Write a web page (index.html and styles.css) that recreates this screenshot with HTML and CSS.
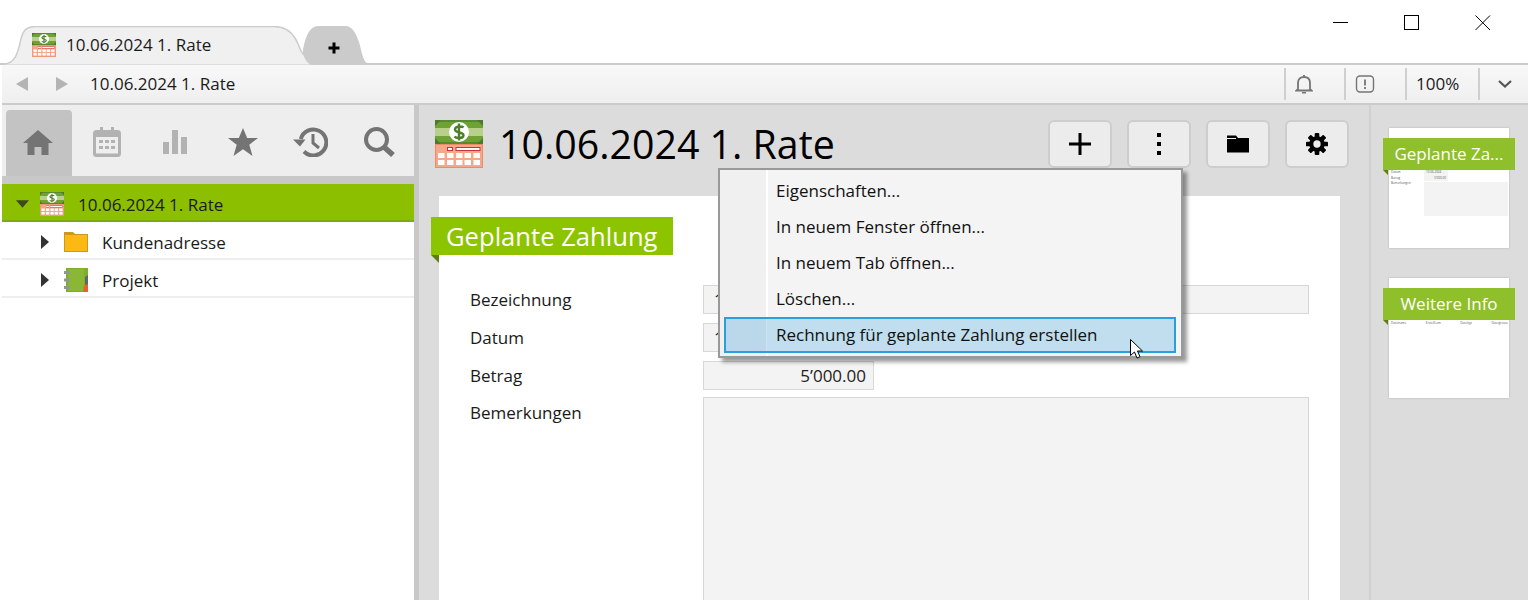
FILE: index.html
```html
<!DOCTYPE html>
<html lang="de">
<head>
<meta charset="utf-8">
<title>10.06.2024 1. Rate</title>
<link rel="stylesheet" href="styles.css">
</head>
<body>
<svg class="defs" width="0" height="0" aria-hidden="true">
  <symbol id="pay" viewBox="0 0 48 48">
    <rect width="48" height="24" fill="#568a30"/>
    <rect y="2" width="48" height="20" fill="#70a135"/>
    <rect x="0" y="8" width="48" height="8" fill="#b9d08c"/>
    <path d="M0 0h6L0 6zM48 0h-6l6 6zM0 24h6l-6-6zM48 24h-6l6-6z" fill="#4b7a2a"/>
    <circle cx="24" cy="12" r="10" fill="#fff"/>
    <path d="M28.5 7.5c-1-1.2-7.500-2-8.500 1.500-1 4.500 9 2.500 8.500 6.500-.5 3.500-7.500 3-9 1M24 3.500v17" fill="none" stroke="#4d7f2a" stroke-width="2.400"/>
    <rect y="24" width="48" height="24" fill="#ee8a66"/>
    <rect x="1" y="25" width="46" height="22" fill="#f5a78a"/>
    <rect x="12.500" y="27.500" width="5" height="3" fill="#fff" stroke="#c8343c" stroke-width="1"/>
    <rect x="21" y="27.500" width="24" height="3" fill="#fff" stroke="#c8343c" stroke-width="1"/>
    <path d="M3 33h6.500v5H3zM12 33h6.500v5H12zM21 33h6.500v5H21zM29.500 33h6.500v5h-6.500zM38.500 33h6.500v5h-6.500zM3 40h6.500v5H3zM12 40h6.500v5H12zM21 40h6.500v5H21zM29.500 40h6.500v5h-6.500zM38.500 40h6.500v5h-6.500z" fill="#fff"/>
  </symbol>
</svg>

<div class="app">
  <header class="titlebar">
    <div class="tabs">
      <div class="tab">
        <svg class="tab-shape" viewBox="0 0 311 39" preserveAspectRatio="none" aria-hidden="true"><path d="M0 38.500C14 38 16 26 19 13 21 4 25 .5 34 .5H272C282 .5 288 4 293 12 297 18 298 26 302 29 304 34 307 38 311 38.500" fill="#f0f0f0" stroke="#cccccc" stroke-width="1.500"/></svg>
        <svg class="ico24" aria-hidden="true"><use href="#pay"/></svg>
        <span class="tab-label">10.06.2024 1. Rate</span>
      </div>
      <div class="tab-add">
        <svg class="tab-shape" viewBox="0 0 67 38" preserveAspectRatio="none" aria-hidden="true"><path d="M0 38V24C2 14 5 0 16 0H42C50 0 53 8 56 16 59 26 60 38 67 38Z" fill="#cbcbcb"/></svg>
        <svg class="plus-small" viewBox="0 0 12 12" aria-hidden="true"><path d="M6 .5v11M.5 6h11" stroke="#000" stroke-width="3"/></svg>
      </div>
    </div>
    <div class="winctl">
      <svg viewBox="0 0 16 16" aria-hidden="true"><path d="M0 7.500h15" stroke="#000" stroke-width="1"/></svg>
      <svg viewBox="0 0 16 16" aria-hidden="true"><rect x=".5" y=".5" width="14" height="14" fill="none" stroke="#000"/></svg>
      <svg viewBox="0 0 16 16" aria-hidden="true"><path d="M.5.500l14.500 14.500M15 .5L.5 15" stroke="#000" fill="none"/></svg>
    </div>
  </header>

  <div class="addrbar">
    <svg class="nav-arrow" viewBox="0 0 12 14" aria-hidden="true"><path d="M12 0v14L0 7z" fill="#b4b4b4"/></svg>
    <svg class="nav-arrow" viewBox="0 0 12 14" aria-hidden="true"><path d="M0 0v14l12-7z" fill="#b4b4b4"/></svg>
    <span class="addr-text">10.06.2024 1. Rate</span>
    <div class="addr-cell bell">
      <svg viewBox="0 0 18 20" aria-hidden="true"><path d="M3 15V9c0-4 2.500-6 6-6s6 2 6 6v6l1.500 1.500h-15zM9 1v2" fill="none" stroke="#757575" stroke-width="1.800"/><path d="M7 18h4v1.500H7z" fill="#757575"/></svg>
    </div>
    <div class="addr-cell alert">
      <svg viewBox="0 0 20 20" aria-hidden="true"><rect x="1.500" y="2" width="17" height="16" rx="3.500" fill="none" stroke="#757575" stroke-width="1.400"/><path d="M10 5.500v6" stroke="#757575" stroke-width="1.800"/><path d="M10 13v2" stroke="#757575" stroke-width="1.800"/></svg>
    </div>
    <div class="addr-cell zoom">100%</div>
    <div class="addr-cell chev">
      <svg viewBox="0 0 14 8" aria-hidden="true"><path d="M1 1l6 5.500L13 1" fill="none" stroke="#555" stroke-width="2.200"/></svg>
    </div>
  </div>

  <div class="workspace">
    <aside class="sidebar">
      <nav class="sidetabs">
        <div class="sidetab active"><svg class="i-home" viewBox="0 0 30 25" aria-hidden="true"><path d="M15 0L0 13h4.500v12h7v-8h7v8h7V13H30z" fill="#747474"/></svg></div>
        <div class="sidetab"><svg class="i-cal" viewBox="0 0 28 30" aria-hidden="true"><path d="M7 0h3v3h8V0h3v3h3.500A3.500 3.500 0 0 1 28 6.500v20a3.500 3.500 0 0 1-3.500 3.500h-21A3.500 3.500 0 0 1 0 26.500v-20A3.500 3.500 0 0 1 3.500 3H7z" fill="#b2b2b2"/><path d="M3 10h22v16.500H3z" fill="#eee"/><path d="M6 13h4v3H6zM12 13h4v3h-4zM18 13h4v3h-4zM6 19h4v3H6zM12 19h4v3h-4zM18 19h4v3h-4z" fill="#b2b2b2"/></svg></div>
        <div class="sidetab"><svg class="i-chart" viewBox="0 0 24 24" aria-hidden="true"><path d="M0 12h6v12H0zM9 0h6v24H9zM18 7h6v17h-6z" fill="#b2b2b2"/></svg></div>
        <div class="sidetab"><svg class="i-star" viewBox="0 0 30 28" aria-hidden="true"><path d="M15 0l4.200 10H30l-8.700 6.700L24.500 28 15 21.300 5.500 28l3.200-11.300L0 10h10.800z" fill="#747474"/></svg></div>
        <div class="sidetab"><svg class="i-hist" viewBox="0 0 35 30" aria-hidden="true"><path d="M7.800 12A13 13 0 1 1 11 24.500" fill="none" stroke="#747474" stroke-width="4"/><path d="M0 12.500h12.500L7 19.500z" fill="#747474"/><path d="M20 7v9l6 5" fill="none" stroke="#747474" stroke-width="3"/></svg></div>
        <div class="sidetab last"><svg class="i-search" viewBox="0 0 32 30" aria-hidden="true"><circle cx="12.500" cy="12.500" r="10.500" fill="none" stroke="#747474" stroke-width="4"/><path d="M20 20l9 8" stroke="#747474" stroke-width="5.500"/></svg></div>
      </nav>
      <div class="tree">
        <div class="row selected">
          <svg class="caret down" viewBox="0 0 14 8" aria-hidden="true"><path d="M0 0h14L7 8z" fill="#3c4a20"/></svg>
          <svg class="ico24" aria-hidden="true"><use href="#pay"/></svg>
          <span>10.06.2024 1. Rate</span>
        </div>
        <div class="row child">
          <svg class="caret" viewBox="0 0 8 14" aria-hidden="true"><path d="M0 0v14l8-7z" fill="#333"/></svg>
          <svg class="ico24" viewBox="0 0 24 24" aria-hidden="true"><path d="M0 2h9l2 2h13v18H0z" fill="#c99a1f"/><rect x="1" y="5" width="22" height="16" fill="#fdb913"/></svg>
          <span>Kundenadresse</span>
        </div>
        <div class="row child">
          <svg class="caret" viewBox="0 0 8 14" aria-hidden="true"><path d="M0 0v14l8-7z" fill="#333"/></svg>
          <svg class="ico24" viewBox="0 0 24 24" aria-hidden="true"><rect x="2" width="22" height="24" fill="#7fad2e"/><rect x="4" y="1" width="16" height="22" fill="#8ab734"/><path d="M0 3h6v3H0zM0 10.500h6v3H0zM0 18h6v3H0z" fill="#8e9a90"/><path d="M21 9l3-2v10l-3 0z" fill="#666"/><path d="M19 24l1-6 4-2v8z" fill="#e8632c"/></svg>
          <span>Projekt</span>
        </div>
      </div>
    </aside>

    <main class="main">
      <div class="pagehead">
        <svg class="ico48" aria-hidden="true"><use href="#pay"/></svg>
        <h1>10.06.2024 1. Rate</h1>
        <div class="actions">
          <button class="btn" type="button"><svg viewBox="0 0 22 22" aria-hidden="true"><path d="M11 0v22M0 11h22" stroke="#000" stroke-width="3"/></svg></button>
          <button class="btn" type="button"><svg viewBox="0 0 6 22" aria-hidden="true"><path d="M1 0h4v4H1zM1 9h4v4H1zM1 18h4v4H1z"/></svg></button>
          <button class="btn" type="button"><svg viewBox="0 0 22 17" aria-hidden="true"><path d="M0 0h9l2 2.500h11V17H0z"/><path d="M0 3h9" stroke="#ececec" stroke-width="1"/></svg></button>
          <button class="btn" type="button"><svg viewBox="0 0 24 24" aria-hidden="true"><g fill="#000"><circle cx="12" cy="12" r="8.500"/><rect x="9.500" y="0" width="5" height="24" rx="1"/><rect x="9.500" y="0" width="5" height="24" rx="1" transform="rotate(45 12 12)"/><rect x="9.500" y="0" width="5" height="24" rx="1" transform="rotate(90 12 12)"/><rect x="9.500" y="0" width="5" height="24" rx="1" transform="rotate(135 12 12)"/></g><circle cx="12" cy="12" r="4" fill="#ececec"/></svg></button>
        </div>
      </div>
      <section class="card">
        <div class="ribbon">Geplante Zahlung</div>
        <div class="form">
          <label>Bezeichnung</label><div class="field wide">1</div>
          <label>Datum</label><div class="field short">1</div>
          <label>Betrag</label><div class="field short num">5’000.00</div>
          <label class="memo-label">Bemerkungen</label><div class="field wide memo"></div>
        </div>
      </section>
    </main>

    <aside class="thumbs">
      <div class="thumb">
        <div class="thumb-ribbon">Geplante Za...</div>
        <div class="mini-form">
          <span>Datum</span><i class="mini-f">10.06.2024</i>
          <span>Betrag</span><i class="mini-f r">5'000.00</i>
          <span>Bemerkungen</span><i class="mini-memo"></i>
        </div>
      </div>
      <div class="thumb">
        <div class="thumb-ribbon">Weitere Info</div>
        <div class="mini-cols"><span>Dateiname</span><span>Erstellt am</span><span>Dateityp</span><span>Dateigrösse</span></div>
      </div>
    </aside>
  </div>

  <div class="menu">
    <div class="item">Eigenschaften...</div>
    <div class="item">In neuem Fenster öffnen...</div>
    <div class="item">In neuem Tab öffnen...</div>
    <div class="item">Löschen...</div>
    <div class="item hot">Rechnung für geplante Zahlung erstellen</div>
  </div>
  <svg class="cursor" viewBox="0 0 14 21" aria-hidden="true"><path d="M.5.500v16l4-3.500 2.500 6 3-1.300-2.500-5.700h5z" fill="#fff" stroke="#000" stroke-width="1"/></svg>
</div>
</body>
</html>
```

FILE: styles.css
```css
* { box-sizing: border-box; }
html, body { margin: 0; height: 100%; overflow: hidden; background: #fff; }
body { font-family: "Open Sans", "Noto Sans", sans-serif; font-size: 17px; color: #1a1a1a; }
.defs { position: absolute; }
.app { position: relative; width: 1528px; height: 600px; display: flex; flex-direction: column; overflow: hidden; }

.titlebar { height: 65px; flex: none; display: flex; justify-content: space-between; align-items: flex-start; border-bottom: 2px solid #cbcbcb; }
.tabs { display: flex; padding: 26px 0 0 2px; height: 65px; }
.tab { position: relative; z-index: 1; width: 311px; height: 39px; display: flex; align-items: center; padding: 0 0 2px 30px; gap: 10px; }
.tab-shape { position: absolute; inset: 0; width: 100%; height: 100%; }
.tab > .ico24, .tab > .tab-label { position: relative; }
.tab-add { position: relative; width: 67px; height: 38px; margin-left: -10px; display: flex; align-items: center; justify-content: center; }
.plus-small { position: relative; width: 12px; height: 12px; margin: 5px 5px 0 0; }
.ico24 { width: 24px; height: 24px; flex: none; }
.ico48 { width: 48px; height: 48px; flex: none; }

.winctl { display: flex; gap: 55px; padding: 15px 37px 0 0; }
.winctl svg { width: 16px; height: 16px; }

.addrbar { height: 40px; flex: none; margin-left: 2px; display: flex; align-items: center; background: linear-gradient(#f8f8f8, #efefef); border-bottom: 2px solid #cbcbcb; padding-left: 14px; }
.nav-arrow { width: 12px; height: 14px; flex: none; margin-right: 28px; }
.addr-text { margin: 0 0 2px -6px; flex: 1; }
.addr-cell { height: 32px; display: flex; align-items: center; border-left: 2px solid #cfcfcf; padding-left: 9px; }
.bell { width: 60px; }
.bell svg { width: 18px; height: 20px; }
.alert { width: 61px; }
.alert svg { width: 20px; height: 20px; }
.zoom { width: 73px; padding-bottom: 2px; }
.chev { width: 50px; padding-left: 18px; }
.chev svg { width: 14px; height: 8px; }

.workspace { flex: 1; min-height: 0; display: flex; margin-left: 2px; }
.sidebar { width: 412px; flex: none; background: #fff; display: flex; flex-direction: column; }
.sidetabs { height: 79px; flex: none; display: flex; align-items: flex-end; padding: 5px 0 8px 4px; background: linear-gradient(#eeeeee 0 71px, #c8c8c8 71px); }
.sidetab { width: 68.500px; height: 66px; display: flex; align-items: center; justify-content: center; padding: 0 2px 2px 0; }
.sidetab.last { padding-right: 0; }
.sidetab.active { width: 66px; margin-right: 2px; background: #c3c3c3; border-radius: 4px 4px 0 0; }
.i-home { width: 30px; height: 25px; }
.i-cal { width: 28px; height: 30px; }
.i-chart { width: 24px; height: 24px; }
.i-star { width: 30px; height: 28px; }
.i-hist { width: 35px; height: 30px; }
.i-search { width: 32px; height: 30px; }
.tree { flex: 1; }
.row { height: 38px; display: flex; align-items: center; border-bottom: 2px solid #eeeeee; padding-top: 4px; }
.row.selected { background: #8cbf00; border-bottom-color: #7ea90f; padding-left: 14px; gap: 11px; }
.row.selected span { margin-left: 3px; }
.row.child { padding-left: 39px; gap: 15px; }
.row.child span { margin-left: -1px; }
.caret { width: 8px; height: 14px; flex: none; }
.caret.down { width: 13px; height: 8px; }

.main { width: 955px; flex: none; background: #dcdcdc; border-left: 5px solid #c8c8c8; display: flex; flex-direction: column; }
.pagehead { height: 91px; flex: none; display: flex; align-items: flex-start; padding: 15px 20px 0 16px; }
.pagehead h1 { margin: 0 0 0 16px; font-size: 39.300px; font-weight: 400; line-height: 48px; color: #000; flex: 1; }
.actions { display: flex; gap: 15px; }
.btn { width: 64px; height: 48px; padding: 0; display: flex; align-items: center; justify-content: center; background: #ececec; border: 2px solid #cdcdcd; border-radius: 6px; }
.btn svg { height: 22px; width: 22px; }
.card { flex: 1; margin: 0 29px 0 20px; background: #fff; padding-top: 21px; }
.ribbon { position: relative; width: 242px; height: 38px; margin-left: -8px; background: #8dc400; color: #fff; font-size: 25.600px; line-height: 40px; padding-left: 15px; }
.ribbon::after { content: ""; position: absolute; left: 0; top: 100%; border-style: solid; border-width: 0 8px 8px 0; border-color: transparent #5e7f10 transparent transparent; }
.form { display: grid; grid-template-columns: 233px 606px; row-gap: 9px; padding: 30px 0 0 31px; align-items: start; }
.form label { line-height: 29px; height: 29px; }
.form .memo-label { margin-top: -1px; }
.field { height: 29px; background: #f3f3f3; border: 1px solid #d8d8d8; line-height: 27px; padding: 0 7px 0 10px; color: #222; }
.short { width: 171px; }
.num { text-align: right; }
.memo { height: 260px; margin-top: -2px; }

.thumbs { flex: 1; background: #dcdcdc; border-left: 2px solid #d0d0d0; padding: 23px 0 0 18px; display: flex; flex-direction: column; gap: 30px; }
.thumb { position: relative; width: 120px; height: 120px; background: #fff; box-shadow: 0 0 2px rgba(0,0,0,.2); padding-top: 10px; }
.thumb-ribbon { position: relative; width: 132px; height: 32px; margin-left: -6px; background: #8fbf2a; color: #fff; text-align: center; line-height: 31px; font-size: 17px; }
.thumb-ribbon::after { content: ""; position: absolute; left: 0; top: 100%; border-style: solid; border-width: 0 5px 5px 0; border-color: transparent #5e7f10 transparent transparent; }
.mini-form { display: grid; grid-template-columns: 33px 24px; grid-auto-rows: 5.500px; padding: 0 0 0 2px; font-size: 3px; line-height: 5.500px; color: #555; }
.mini-f { background: #f3f3f3; font-style: normal; padding: 0 2px; }
.mini-f.r { text-align: right; }
.mini-memo { display: block; width: 84px; height: 34px; margin-top: 1px; background: #f3f3f3; }
.mini-cols { display: flex; justify-content: space-between; padding: 1px 1px 0 2px; font-size: 3px; line-height: 5px; color: #555; }

.menu { position: absolute; left: 718px; top: 168px; width: 465px; height: 190px; padding: 3px 5px 5px 4px; background: linear-gradient(90deg, #f0f0f0 0 46px, #fff 46px 48px, #f4f4f4 48px); border: 2px solid #999; box-shadow: 4px 4px 4px rgba(0,0,0,.4); }
.item { height: 36px; line-height: 36px; padding-left: 52px; color: #111; }
.item.hot { padding-left: 50px; line-height: 31px; background: linear-gradient(90deg, #bad8ea 0 40px, #cde3ef 40px 41px, #c0deee 41px); border: 2px solid #2a9fdc; }
.cursor { position: absolute; left: 1130px; top: 339px; width: 14px; height: 21px; }
```
